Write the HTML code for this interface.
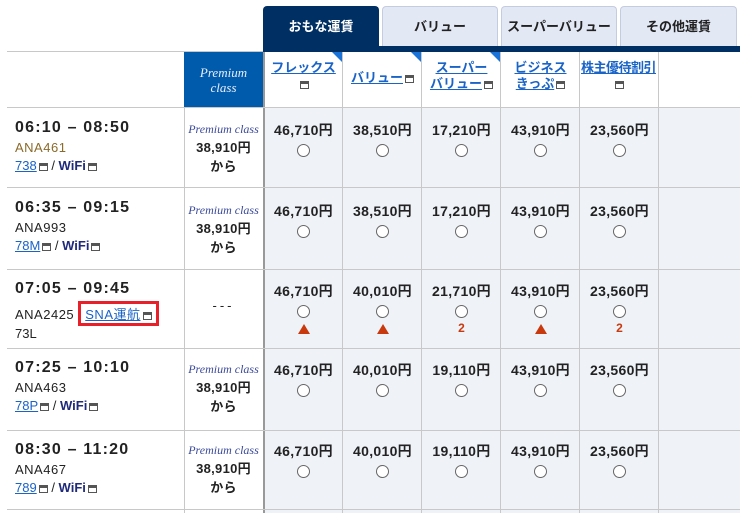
<!DOCTYPE html>
<html><head><meta charset="utf-8"><style>
*{margin:0;padding:0;box-sizing:border-box}
body{width:744px;height:513px;background:#fff;position:relative;overflow:hidden;font-family:"Liberation Sans","Noto Sans CJK JP",sans-serif;color:#222}
.a{position:absolute}
.tab{position:absolute;top:6px;height:40px;background:#e3e8f5;border:1px solid #c5cce0;border-bottom:none;border-radius:4px 4px 0 0;font-size:13px;font-weight:bold;text-align:center;line-height:40px;color:#222}
.hl{position:absolute;background:#c8c8c8}
.fare{position:absolute;background:#eff3f8}
.pc{position:absolute;width:79px;text-align:center}
.pr{font-size:14px;font-weight:bold;letter-spacing:0.3px}
.circ{width:13px;height:13px;border:1px solid #666;border-radius:50%;background:#fff;margin:4px auto 0}
.tri{width:0;height:0;border-left:6px solid transparent;border-right:6px solid transparent;border-bottom:10px solid #c8390e;margin:6px auto 0}
.num{color:#c8390e;font-size:12px;font-weight:bold;margin-top:3px}
.hd{position:absolute;top:60px;width:79px;text-align:center;font-size:13px;font-weight:bold;line-height:16px}
.hd a,.lk{color:#1a63c7;text-decoration:underline}
.ic{display:inline-block;width:9px;height:8px;border:1.5px solid #555;border-top-width:3px;vertical-align:middle;margin-left:2px}
.cor{position:absolute;top:52px;width:0;height:0;border-top:10px solid #1a73d9;border-left:10px solid transparent}
.time{font-size:16px;font-weight:bold;letter-spacing:1.2px}
.fl{font-size:13px;margin-top:3px;letter-spacing:0.5px}
.eq{font-size:13px;margin-top:3px}
.wifi{color:#1f2a7a;font-weight:bold;font-size:13px}
.pcls{font-family:"Liberation Serif",serif;font-style:italic;color:#3b4a9a;font-size:12px;white-space:nowrap}
</style></head><body>
<div class="tab" style="left:263px;width:116px;background:#002f63;border-color:#002f63;color:#fff">おもな運賃</div>
<div class="tab" style="left:382px;width:116px">バリュー</div>
<div class="tab" style="left:501px;width:116px">スーパーバリュー</div>
<div class="tab" style="left:620px;width:117px">その他運賃</div>
<div class="a" style="left:263px;top:46px;width:477px;height:6px;background:#002f63"></div>
<div class="hl" style="left:7px;top:51px;width:256px;height:1px"></div>
<div class="a" style="left:184px;top:52px;width:79px;height:55px;background:#005bac;color:#e8eefa;text-align:center;font-family:'Liberation Serif',serif;font-style:italic;font-size:13px;line-height:15px;padding-top:13px">Premium<br>class</div>
<div class="fare" style="left:263px;top:107px;width:477px;height:406px"></div>
<div class="hl" style="left:184px;top:107px;width:1px;height:406px"></div>
<div class="hl" style="left:263px;top:52px;width:2px;height:461px;background:#999"></div>
<div class="hl" style="left:342px;top:52px;width:1px;height:461px"></div>
<div class="hl" style="left:421px;top:52px;width:1px;height:461px"></div>
<div class="hl" style="left:500px;top:52px;width:1px;height:461px"></div>
<div class="hl" style="left:579px;top:52px;width:1px;height:461px"></div>
<div class="hl" style="left:658px;top:52px;width:1px;height:461px"></div>
<div class="hl" style="left:7px;top:107px;width:733px;height:1px"></div>
<div class="hl" style="left:7px;top:187px;width:733px;height:1px"></div>
<div class="hl" style="left:7px;top:269px;width:733px;height:1px"></div>
<div class="hl" style="left:7px;top:348px;width:733px;height:1px"></div>
<div class="hl" style="left:7px;top:430px;width:733px;height:1px"></div>
<div class="hl" style="left:7px;top:509px;width:733px;height:1px"></div>
<div class="cor" style="left:332px"></div><div class="cor" style="left:411px"></div><div class="cor" style="left:490px"></div>
<div class="hd" style="left:264px"><a>フレックス</a><br><span class="ic"></span></div>
<div class="hd" style="left:343px;top:70px"><a>バリュー</a><span class="ic"></span></div>
<div class="hd" style="left:422px"><a>スーパー</a><br><a>バリュー</a><span class="ic"></span></div>
<div class="hd" style="left:501px"><a>ビジネス</a><br><a>きっぷ</a><span class="ic"></span></div>
<div class="hd" style="left:579px;letter-spacing:-0.5px"><a>株主優待割引</a><br><span class="ic"></span></div>

<div class="a" style="left:15px;top:119px"><div class="time">06:10 – 08:50</div><div class="fl" style="color:#8a6a2a">ANA461</div><div class="eq"><span class="lk">738</span><span class="ic"></span> / <span class="wifi">WiFi</span><span class="ic"></span></div></div>
<div class="a" style="left:15px;top:199px"><div class="time">06:35 – 09:15</div><div class="fl">ANA993</div><div class="eq"><span class="lk">78M</span><span class="ic"></span> / <span class="wifi">WiFi</span><span class="ic"></span></div></div>
<div class="a" style="left:15px;top:280px"><div class="time">07:05 – 09:45</div><div class="fl">ANA2425 <span style="display:inline-block;border:3px solid #e8202a;padding:0 4px"><span class="lk">SNA運航</span><span class="ic"></span></span></div><div class="eq" style="margin-top:0">73L</div></div>
<div class="a" style="left:15px;top:359px"><div class="time">07:25 – 10:10</div><div class="fl">ANA463</div><div class="eq"><span class="lk">78P</span><span class="ic"></span> / <span class="wifi">WiFi</span><span class="ic"></span></div></div>
<div class="a" style="left:15px;top:441px"><div class="time">08:30 – 11:20</div><div class="fl">ANA467</div><div class="eq"><span class="lk">789</span><span class="ic"></span> / <span class="wifi">WiFi</span><span class="ic"></span></div></div>

<div class="pc" style="left:184px;top:122px"><div class="pcls">Premium class</div><div class="pr" style="font-size:13px">38,910円</div><div class="pr" style="font-size:13px">から</div></div>
<div class="pc" style="left:184px;top:203px"><div class="pcls">Premium class</div><div class="pr" style="font-size:13px">38,910円</div><div class="pr" style="font-size:13px">から</div></div>
<div class="pc" style="left:184px;top:298px;font-size:13px;letter-spacing:3px">---</div>
<div class="pc" style="left:184px;top:362px"><div class="pcls">Premium class</div><div class="pr" style="font-size:13px">38,910円</div><div class="pr" style="font-size:13px">から</div></div>
<div class="pc" style="left:184px;top:443px"><div class="pcls">Premium class</div><div class="pr" style="font-size:13px">38,910円</div><div class="pr" style="font-size:13px">から</div></div>

<div class="pc" style="left:264px;top:120px"><div class="pr">46,710円</div><div class="circ"></div></div>
<div class="pc" style="left:343px;top:120px"><div class="pr">38,510円</div><div class="circ"></div></div>
<div class="pc" style="left:422px;top:120px"><div class="pr">17,210円</div><div class="circ"></div></div>
<div class="pc" style="left:501px;top:120px"><div class="pr">43,910円</div><div class="circ"></div></div>
<div class="pc" style="left:580px;top:120px"><div class="pr">23,560円</div><div class="circ"></div></div>
<div class="pc" style="left:264px;top:201px"><div class="pr">46,710円</div><div class="circ"></div></div>
<div class="pc" style="left:343px;top:201px"><div class="pr">38,510円</div><div class="circ"></div></div>
<div class="pc" style="left:422px;top:201px"><div class="pr">17,210円</div><div class="circ"></div></div>
<div class="pc" style="left:501px;top:201px"><div class="pr">43,910円</div><div class="circ"></div></div>
<div class="pc" style="left:580px;top:201px"><div class="pr">23,560円</div><div class="circ"></div></div>
<div class="pc" style="left:264px;top:281px"><div class="pr">46,710円</div><div class="circ"></div><div class="tri"></div></div>
<div class="pc" style="left:343px;top:281px"><div class="pr">40,010円</div><div class="circ"></div><div class="tri"></div></div>
<div class="pc" style="left:422px;top:281px"><div class="pr">21,710円</div><div class="circ"></div><div class="num">2</div></div>
<div class="pc" style="left:501px;top:281px"><div class="pr">43,910円</div><div class="circ"></div><div class="tri"></div></div>
<div class="pc" style="left:580px;top:281px"><div class="pr">23,560円</div><div class="circ"></div><div class="num">2</div></div>
<div class="pc" style="left:264px;top:360px"><div class="pr">46,710円</div><div class="circ"></div></div>
<div class="pc" style="left:343px;top:360px"><div class="pr">40,010円</div><div class="circ"></div></div>
<div class="pc" style="left:422px;top:360px"><div class="pr">19,110円</div><div class="circ"></div></div>
<div class="pc" style="left:501px;top:360px"><div class="pr">43,910円</div><div class="circ"></div></div>
<div class="pc" style="left:580px;top:360px"><div class="pr">23,560円</div><div class="circ"></div></div>
<div class="pc" style="left:264px;top:441px"><div class="pr">46,710円</div><div class="circ"></div></div>
<div class="pc" style="left:343px;top:441px"><div class="pr">40,010円</div><div class="circ"></div></div>
<div class="pc" style="left:422px;top:441px"><div class="pr">19,110円</div><div class="circ"></div></div>
<div class="pc" style="left:501px;top:441px"><div class="pr">43,910円</div><div class="circ"></div></div>
<div class="pc" style="left:580px;top:441px"><div class="pr">23,560円</div><div class="circ"></div></div>
</body></html>
